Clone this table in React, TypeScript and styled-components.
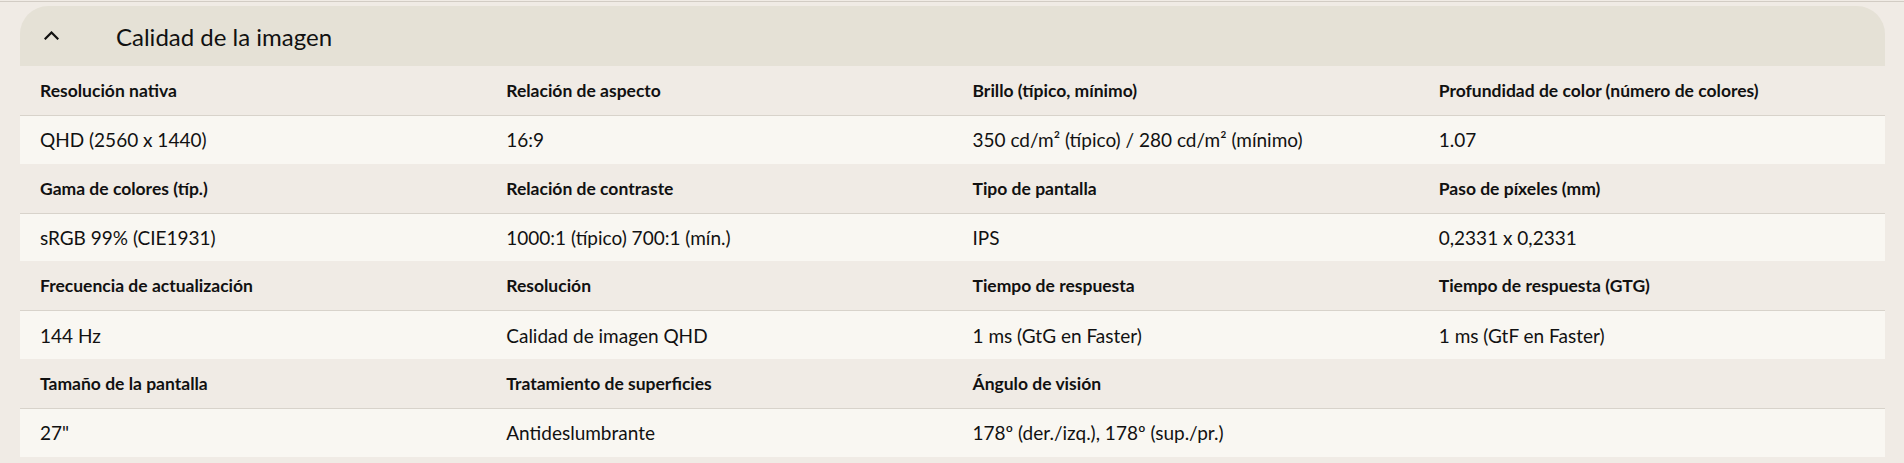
import React from "react";
import styled, { createGlobalStyle } from "styled-components";

const GlobalStyle = createGlobalStyle`
  html, body {
    margin: 0;
    padding: 0;
    background: #f0ebe5;
  }
  body {
    font-family: Lato, "Open Sans", "Noto Sans", sans-serif;
    color: #111111;
  }
`;

const Page = styled.div`
  display: flex;
  flex-direction: column;
  padding: 1px 19px 7px 20px;
  min-height: 463px;
  box-sizing: border-box;
`;

const TopRule = styled.div`
  height: 1px;
  margin: 0 -20px;
  background: #d2ccc4;
`;

const Panel = styled.section`
  margin-top: 4px;
  display: flex;
  flex-direction: column;
`;

const Header = styled.div`
  height: 60px;
  display: flex;
  align-items: center;
  gap: 57px;
  padding-left: 24px;
  background: #e5e1d6;
  border-radius: 28px 28px 0 0;
`;

const Toggle = styled.button`
  display: flex;
  align-items: center;
  justify-content: center;
  width: 15px;
  height: 10px;
  padding: 0;
  margin-top: -2px;
  border: none;
  background: transparent;
  color: #111111;
  cursor: pointer;
`;

const Title = styled.h3`
  margin: 0;
  font-size: 24px;
  font-weight: 400;
  letter-spacing: 0;
  color: #111111;
`;

const SpecGrid = styled.div`
  display: flex;
  flex-direction: column;
`;

const Row = styled.div<{ $kind: "label" | "value" }>`
  display: grid;
  grid-template-columns: repeat(4, 1fr);
  height: ${(p) => (p.$kind === "label" ? "49px" : "47.67px")};
  background: ${(p) => (p.$kind === "label" ? "#f0ebe5" : "#f9f7f2")};
  border-bottom: ${(p) => (p.$kind === "label" ? "1px solid #d8d3cb" : "none")};
`;

const Cell = styled.div<{ $kind: "label" | "value" }>`
  display: flex;
  align-items: center;
  padding: 0 20px;
  font-size: ${(p) => (p.$kind === "label" ? "17.5px" : "19px")};
  font-weight: ${(p) => (p.$kind === "label" ? 700 : 400)};
  color: #111111;
  white-space: nowrap;
`;

type Spec = { label: string; value: string };

const groups: Spec[][] = [
  [
    { label: "Resolución nativa", value: "QHD (2560 x 1440)" },
    { label: "Relación de aspecto", value: "16:9" },
    { label: "Brillo (típico, mínimo)", value: "350 cd/m² (típico) / 280 cd/m² (mínimo)" },
    { label: "Profundidad de color (número de colores)", value: "1.07" },
  ],
  [
    { label: "Gama de colores (típ.)", value: "sRGB 99% (CIE1931)" },
    { label: "Relación de contraste", value: "1000:1 (típico) 700:1 (mín.)" },
    { label: "Tipo de pantalla", value: "IPS" },
    { label: "Paso de píxeles (mm)", value: "0,2331 x 0,2331" },
  ],
  [
    { label: "Frecuencia de actualización", value: "144 Hz" },
    { label: "Resolución", value: "Calidad de imagen QHD" },
    { label: "Tiempo de respuesta", value: "1 ms (GtG en Faster)" },
    { label: "Tiempo de respuesta (GTG)", value: "1 ms (GtF en Faster)" },
  ],
  [
    { label: "Tamaño de la pantalla", value: '27"' },
    { label: "Tratamiento de superficies", value: "Antideslumbrante" },
    { label: "Ángulo de visión", value: "178º (der./izq.), 178º (sup./pr.)" },
    { label: "", value: "" },
  ],
];

const ChevronUp = () => (
  <svg width="15" height="9" viewBox="0 0 15 9" fill="none" aria-hidden="true">
    <path d="M1.5 7.5 L7.5 1.5 L13.5 7.5" stroke="currentColor" strokeWidth="2.2" strokeLinecap="square" />
  </svg>
);

export default function App() {
  return (
    <>
      <GlobalStyle />
      <Page>
        <TopRule />
        <Panel>
          <Header>
            <Toggle aria-label="Contraer">
              <ChevronUp />
            </Toggle>
            <Title>Calidad de la imagen</Title>
          </Header>
          <SpecGrid>
            {groups.map((g, gi) => (
              <React.Fragment key={gi}>
                <Row $kind="label">
                  {g.map((s, i) => (
                    <Cell $kind="label" key={i}>
                      {s.label}
                    </Cell>
                  ))}
                </Row>
                <Row $kind="value">
                  {g.map((s, i) => (
                    <Cell $kind="value" key={i}>
                      {s.value}
                    </Cell>
                  ))}
                </Row>
              </React.Fragment>
            ))}
          </SpecGrid>
        </Panel>
      </Page>
    </>
  );
}
